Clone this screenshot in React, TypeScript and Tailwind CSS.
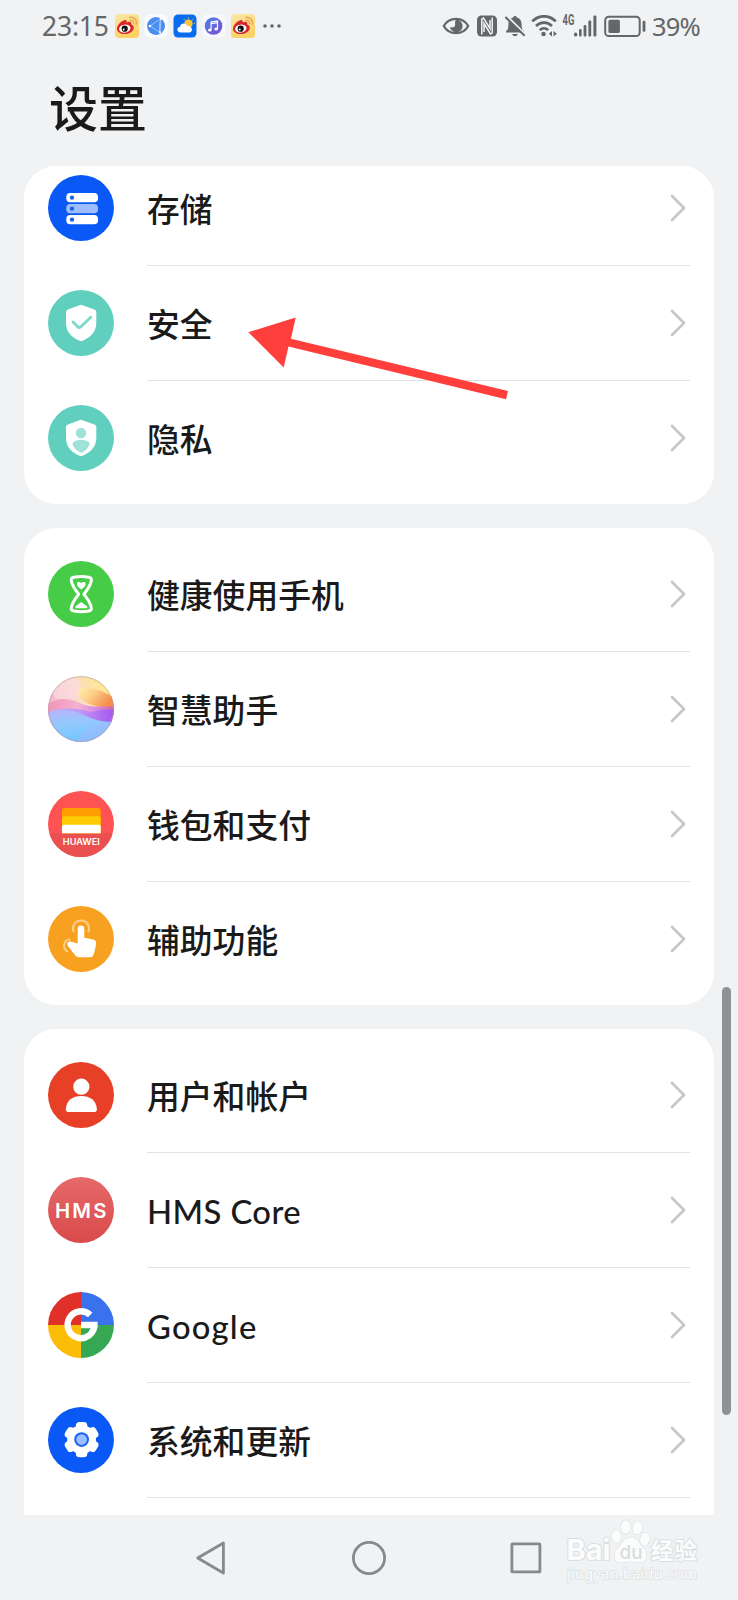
import type { ReactNode } from "react";

const SHIELD = "M33 14.7 L46.5 19.6 Q48.3 20.4 48.3 22.3 V33 C48.3 42 42 48 33 51.3 C24 48 18 42 18 33 V22.3 Q18 20.4 19.8 19.6 Z";

function Icon({ bg, children }: { bg: string; children: ReactNode }) {
  return (
    <svg width="66" height="66" viewBox="0 0 66 66" className="shrink-0">
      <circle cx="33" cy="33" r="33" fill={bg} />
      {children}
    </svg>
  );
}

function StorageIcon() {
  return (
    <Icon bg="#0a59f7">
      <rect x="18.3" y="18" width="31.7" height="9.2" rx="3.8" fill="#fff" />
      <rect x="18.3" y="29" width="31.7" height="9.2" rx="3.8" fill="#9dbdfc" />
      <rect x="18.3" y="40" width="31.7" height="9.2" rx="3.8" fill="#fff" />
      {[22.6, 33.6, 44.6].map((y) => (
        <circle key={y} cx="24" cy={y} r="2.2" fill="#1b5fe8" />
      ))}
    </Icon>
  );
}

function SecurityIcon() {
  return (
    <Icon bg="#61cfbe">
      <path d={SHIELD} fill="#fff" />
      <path d="M25 32 L30.3 37.3 Q31.3 38 32.3 37.2 L42.8 27.2" fill="none" stroke="#7dd8ca" strokeWidth="2.8" strokeLinecap="round" />
    </Icon>
  );
}

function PrivacyIcon() {
  return (
    <Icon bg="#61cfbe">
      <path d={SHIELD} fill="#fff" />
      <circle cx="33" cy="28" r="5.2" fill="#9fe2d7" />
      <path d="M24.5 38.5 C27 33.5 39 33.5 41.7 38.5 C41 42.5 37 46.5 33 47.8 C29 46.5 25.3 42.5 24.5 38.5 Z" fill="#9fe2d7" />
    </Icon>
  );
}

function HourglassIcon() {
  return (
    <Icon bg="#47cc47">
      <path
        d="M26 16.2 Q33.3 15 40.6 16.2 Q43.8 16.7 43.3 19.5 C42.5 25.5 38.5 29.5 36 33.2 C38.5 37 42.5 41 43.3 46.8 Q43.8 49.6 40.6 50.1 Q33.3 51.3 26 50.1 Q22.8 49.6 23.3 46.8 C24.1 41 28.1 37 30.6 33.2 C28.1 29.5 24.1 25.5 23.3 19.5 Q22.8 16.7 26 16.2 Z"
        fill="none"
        stroke="#fff"
        strokeWidth="3"
        strokeLinejoin="round"
      />
      <path d="M33.3 28.5 C30.5 26.3 28.6 24.5 29 22.5 C29.5 20.6 32 20.5 33.3 22.3 C34.6 20.5 37.2 20.6 37.7 22.5 C38 24.5 36 26.3 33.3 28.5 Z" fill="#fff" />
      <path d="M33.3 41 L39.3 45.4 Q39.8 47.2 38 47.2 H28.6 Q26.8 47.2 27.3 45.4 Z" fill="#fff" />
    </Icon>
  );
}

function AssistantIcon() {
  return (
    <svg width="66" height="66" viewBox="0 0 66 66" className="shrink-0">
      <defs>
        <clipPath id="ball"><circle cx="33" cy="33" r="33" /></clipPath>
        <linearGradient id="sky" x1="0" y1="0.4" x2="0.8" y2="0">
          <stop offset="0" stopColor="#f5b3cb" />
          <stop offset="0.5" stopColor="#fbdcc9" />
          <stop offset="1" stopColor="#fbe98c" />
        </linearGradient>
        <linearGradient id="sun" x1="0" y1="0" x2="1" y2="0.5">
          <stop offset="0" stopColor="#fff3ae" />
          <stop offset="0.45" stopColor="#fbd08a" />
          <stop offset="1" stopColor="#f68d4c" />
        </linearGradient>
        <linearGradient id="dune" x1="0" y1="0" x2="1" y2="0">
          <stop offset="0" stopColor="#ef95b6" />
          <stop offset="0.45" stopColor="#f5b2d2" />
          <stop offset="0.75" stopColor="#d583e4" />
          <stop offset="1" stopColor="#d0649f" />
        </linearGradient>
        <linearGradient id="violet" x1="0" y1="0" x2="1" y2="0">
          <stop offset="0" stopColor="#c0b4f4" />
          <stop offset="0.5" stopColor="#c193f8" />
          <stop offset="1" stopColor="#a457ee" />
        </linearGradient>
        <linearGradient id="sea" x1="0.3" y1="0" x2="0.5" y2="1">
          <stop offset="0" stopColor="#b3b6fa" />
          <stop offset="0.4" stopColor="#94c8fd" />
          <stop offset="1" stopColor="#6fc8fe" />
        </linearGradient>
      </defs>
      <g clipPath="url(#ball)">
        <rect width="66" height="66" fill="url(#sky)" />
        <circle cx="18" cy="12" r="14" fill="#fbdadf" opacity="0.7" />
        <path d="M0 28 C12 20 24 23 34 28 C46 32 56 31 66 27 V50 H0 Z" fill="url(#dune)" />
        <path d="M30 16 C32 9 52 11 66 22 V30 C50 33 31 27 30 16 Z" fill="url(#sun)" />
        <path d="M0 36 C14 31 30 32 42 36 C52 34 58 33 66 34 V50 H0 Z" fill="url(#violet)" />
        <path d="M0 37 C14 31 26 34 36 39 C46 44 56 47 66 45 V66 H0 Z" fill="url(#sea)" />
        <path d="M28 66 C34 54 50 46 66 46 V66 Z" fill="#a6b4fb" opacity="0.5" />
      </g>
      <circle cx="33" cy="33" r="32.4" fill="none" stroke="#b99aa8" strokeWidth="1" opacity="0.6" />
    </svg>
  );
}

function WalletIcon() {
  return (
    <Icon bg="#ff5252">
      <path d="M1.3 42.3 H64.7 A33 33 0 0 1 1.3 42.3 Z" fill="#e9504f" />
      <path d="M14 42.3 V19 Q14 17 16 17 H50.5 Q52.7 17 52.7 19 V42.3 Z" fill="#ff9d00" />
      <path d="M14 42.3 V27 Q14 25.2 16 25.2 H50.5 Q52.7 25.2 52.7 27 V42.3 Z" fill="#ffcb05" />
      <path d="M14 42.3 V36 Q14 33.8 16 33.8 H50.5 Q52.7 33.8 52.7 36 V42.3 Z" fill="#fff" />
      <text x="14.8" y="54.4" textLength="37" lengthAdjust="spacingAndGlyphs" fontFamily="Inter, sans-serif" fontSize="8.4" fontWeight="600" fill="#fff">
        HUAWEI
      </text>
    </Icon>
  );
}

function TouchIcon() {
  return (
    <Icon bg="#f8a120">
      <path d="M25.6 25.5 A8 8 0 1 1 40.4 25.5" fill="none" stroke="#fbd08f" strokeWidth="2" strokeLinecap="round" />
      <path d="M21.4 33.4 C16 34.5 14 41 19 45.5" fill="none" stroke="#fbd08f" strokeWidth="2" strokeLinecap="round" />
      <path
        d="M29.7 22.8 A3.3 3.3 0 0 1 36.3 22.8 V31.8 L45.2 33.4 Q48.2 34.2 48 37.2 C47.6 42 46.8 45 45.4 49 Q44.7 51.2 42.3 51.2 H31 Q28.8 51.2 27.3 49.6 L20.3 40.6 C18 37.5 20.5 35 23.2 35.7 L29.7 37.4 Z"
        fill="#fff"
      />
    </Icon>
  );
}

function UserIcon() {
  return (
    <Icon bg="#e84026">
      <circle cx="33.3" cy="24.7" r="8.1" fill="#fff" />
      <path d="M17.8 47.2 C18.3 38.5 24.5 34 33.3 34 C42.1 34 48.4 38.5 48.9 47.2 Q48.9 50 46 50 H20.7 Q17.8 50 17.8 47.2 Z" fill="#fff" />
    </Icon>
  );
}

function HmsIcon() {
  return (
    <Icon bg="url(#hms)">
      <defs>
        <linearGradient id="hms" x1="0" y1="0" x2="0" y2="1">
          <stop offset="0" stopColor="#e6696a" />
          <stop offset="1" stopColor="#d94a4b" />
        </linearGradient>
      </defs>
      <text x="7" y="40.6" textLength="51.5" lengthAdjust="spacing" fontFamily="Inter, sans-serif" fontSize="20.3" fontWeight="600" fill="#fff">
        HMS
      </text>
    </Icon>
  );
}

function GoogleIcon() {
  return (
    <svg width="66" height="66" viewBox="0 0 66 66" className="shrink-0">
      <path d="M33 33 V0 A33 33 0 0 0 0 33 Z" fill="#e1302a" />
      <path d="M33 33 H66 A33 33 0 0 0 33 0 Z" fill="#3a72ee" />
      <path d="M33 33 V66 A33 33 0 0 0 66 33 Z" fill="#36a853" />
      <path d="M33 33 H0 A33 33 0 0 0 33 66 Z" fill="#fbbc05" />
      <path d="M42.2 23 A13.4 13.4 0 1 0 46.4 33" fill="none" stroke="#fff" strokeWidth="6.4" />
      <path d="M33 29.8 H49.6 V33 L49.3 36.2 H33 Z" fill="#fff" />
    </svg>
  );
}

function SystemIcon() {
  return (
    <Icon bg="#0a59f7">
      <circle cx="33.6" cy="32.6" r="14.4" fill="#fff" />
      {[0, 60, 120].map((a) => (
        <rect key={a} x="27.9" y="14.9" width="11.4" height="35.4" rx="3.6" fill="#fff" transform={`rotate(${a} 33.6 32.6)`} />
      ))}
      <circle cx="33.6" cy="32.6" r="7.4" fill="#1c64f5" />
      <circle cx="33.6" cy="32.6" r="5.3" fill="#9dbdfc" />
    </Icon>
  );
}

interface Item {
  label: string;
  icon: ReactNode;
  tracking?: string;
}

const storageItems: Item[] = [
  { label: "存储", icon: <StorageIcon /> },
  { label: "安全", icon: <SecurityIcon /> },
  { label: "隐私", icon: <PrivacyIcon /> },
];

const featureItems: Item[] = [
  { label: "健康使用手机", icon: <HourglassIcon /> },
  { label: "智慧助手", icon: <AssistantIcon /> },
  { label: "钱包和支付", icon: <WalletIcon /> },
  { label: "辅助功能", icon: <TouchIcon /> },
];

const systemItems: Item[] = [
  { label: "用户和帐户", icon: <UserIcon /> },
  { label: "HMS Core", icon: <HmsIcon />, tracking: "tracking-[0.4px]" },
  { label: "Google", icon: <GoogleIcon />, tracking: "tracking-[1.2px]" },
  { label: "系统和更新", icon: <SystemIcon /> },
];

function Row({ item, divider }: { item: Item; divider: boolean }) {
  return (
    <div className="flex h-[115px] shrink-0 px-6">
      <div className="flex h-[114px] items-center">{item.icon}</div>
      <div className={`ml-[33px] flex flex-1 items-center justify-between border-b pr-[4px] ${divider ? "border-[#e2e2e3]" : "border-transparent"}`}>
        <span className={`pt-[4px] text-[32.8px] font-medium leading-none text-[#1a1a1a] ${item.tracking ?? ""}`}>{item.label}</span>
        <svg width="16" height="28" viewBox="0 0 16 28" fill="none" stroke="#c6c6c7" strokeWidth="2.7" strokeLinecap="round" strokeLinejoin="round">
          <path d="M2 2 L14 14 L2 26" />
        </svg>
      </div>
    </div>
  );
}

function WeiboIcon() {
  return (
    <svg width="24" height="24" viewBox="0 0 24 24">
      <defs>
        <linearGradient id="weibo" x1="0" y1="0" x2="0.3" y2="1">
          <stop offset="0" stopColor="#fbe7a8" />
          <stop offset="1" stopColor="#fbd164" />
        </linearGradient>
      </defs>
      <rect width="24" height="24" rx="4" fill="url(#weibo)" />
      <path d="M9.5 6.2 C11.5 5.6 12 6.8 11.6 8.4 C14.5 7.3 17 7.6 16.2 10.6 C18.5 11.4 19.2 13 18.6 15 C17.4 18.4 13.6 20.2 9.6 20.1 C5.4 20 2 18 2 14.8 C2 11.6 5.6 7.2 9.5 6.2 Z" fill="#d9272b" />
      <ellipse cx="9.8" cy="14.6" rx="5.7" ry="4" fill="#fff" transform="rotate(-8 9.8 14.6)" />
      <circle cx="9.7" cy="14.7" r="3.1" fill="#111" />
      <circle cx="8.7" cy="15.6" r="1" fill="#fff" />
      <path d="M14.8 3.4 C18.8 2.6 22.4 6.2 21.3 10.4 M15.2 6.4 C17.4 6 19.2 7.8 18.6 9.8" fill="none" stroke="#e9a95a" strokeWidth="1.5" strokeLinecap="round" />
    </svg>
  );
}

function StatusBar() {
  return (
    <header className="flex h-[52px] shrink-0 items-center pl-[42px] font-['Noto_Sans',sans-serif] text-[26.5px] leading-none text-[#646668]">
      <span className="w-[73px] whitespace-nowrap pt-px tracking-[-0.2px]">23:15</span>
      <div className="flex items-center gap-[5px] pb-px">
        <WeiboIcon />
        <svg width="24" height="24" viewBox="0 0 24 24">
          <rect x="0.5" y="0.5" width="23" height="23" rx="5" fill="#fbfcfe" />
          <circle cx="12" cy="12" r="9" fill="#4a8df0" />
          <path d="M17 4.5 L6 12 L16 18.5 Z M3.5 12 H6 M17 4.5 C15 9 15 14 16 18.5" fill="none" stroke="#b4d1fa" strokeWidth="0.8" />
          <circle cx="6" cy="12" r="1.2" fill="#fff" />
          <circle cx="16.6" cy="5" r="1" fill="#fff" />
          <circle cx="16" cy="18.3" r="1.1" fill="#fff" />
        </svg>
        <svg width="24" height="24" viewBox="0 0 24 24">
          <rect x="0.5" y="0.5" width="23" height="23" rx="4.5" fill="#0a6df0" />
          <circle cx="15.5" cy="9.5" r="4.1" fill="#fcc63d" />
          <path d="M15.5 4.4 V3.4 M19.4 5.9 L20.2 5.1 M20.8 9.5 H21.8 M11.6 5.9 L10.8 5.1" stroke="#fcc63d" strokeWidth="1" />
          <path d="M7.6 18.4 C3.6 18.4 3.3 13.3 7 12.8 C7.6 8.7 13 8.5 14.1 12 C19.7 11 20.5 18.4 16.2 18.4 Z" fill="#fff" />
        </svg>
        <svg width="24" height="24" viewBox="0 0 24 24">
          <defs>
            <linearGradient id="music" x1="0" y1="0" x2="1" y2="1">
              <stop offset="0" stopColor="#4b86e8" />
              <stop offset="1" stopColor="#7d4bd0" />
            </linearGradient>
          </defs>
          <rect x="0.5" y="0.5" width="23" height="23" rx="5" fill="#f8f8fd" />
          <circle cx="11.5" cy="12" r="8.8" fill="url(#music)" />
          <path d="M9.1 15.7 V7.9 L15.5 6.9 V14.7 M9.1 9.6 L15.5 8.6" fill="none" stroke="#fff" strokeWidth="1.2" />
          <ellipse cx="7.8" cy="15.9" rx="1.8" ry="1.5" fill="#fff" />
          <ellipse cx="14.2" cy="14.9" rx="1.8" ry="1.5" fill="#fff" />
        </svg>
        <WeiboIcon />
      </div>
      <svg width="20" height="6" viewBox="0 0 20 6" className="ml-[7px]" fill="currentColor">
        <circle cx="3" cy="3" r="1.8" />
        <circle cx="10" cy="3" r="1.8" />
        <circle cx="17" cy="3" r="1.8" />
      </svg>

      <div className="ml-auto flex items-center pb-px pr-[38px]">
        {/* eye comfort */}
        <svg width="28" height="20" viewBox="0 0 28 20">
          <path d="M1.8 10 C7 0.4 21 0.4 26.2 10 C21 19.6 7 19.6 1.8 10 Z" fill="none" stroke="currentColor" strokeWidth="2.3" />
          <path d="M14.3 3.6 A6.4 6.4 0 1 1 7.9 11 C10 12.2 13.5 11 13.2 8.4 C13 6.5 12.8 5 14.3 3.6 Z" fill="currentColor" />
        </svg>
        {/* nfc */}
        <svg width="22" height="22" viewBox="0 0 22 22" className="ml-[6px]">
          <rect x="1" y="0.5" width="20" height="21" rx="4.5" fill="currentColor" />
          <path d="M5.8 19.5 V4.2 L7.5 3 L14 13.5 V5 M16.2 2.5 V17.8 L14.5 19 L8 8.5 V17" fill="none" stroke="#f0f2f4" strokeWidth="1.5" />
        </svg>
        {/* muted */}
        <svg width="22" height="22" viewBox="0 0 22 22" className="ml-[6px]">
          <path d="M11 1 Q12.6 1 12.8 2.4 C16.6 3.4 17.6 6.4 17.6 10 C17.6 13.5 18.6 14.8 20 16.2 V17.4 H2 V16.2 C3.6 14.8 4.4 13.5 4.4 10 C4.4 6.4 5.4 3.4 9.2 2.4 Q9.4 1 11 1 Z" fill="currentColor" />
          <path d="M8 19 H14 Q13 21.3 11 21.3 Q9 21.3 8 19 Z" fill="currentColor" />
          <path d="M2.8 1 L22 20" stroke="#f0f2f4" strokeWidth="2" />
          <path d="M1.4 2 L20.6 20.8" stroke="currentColor" strokeWidth="2" />
        </svg>
        {/* wifi */}
        <svg width="27" height="22" viewBox="0 0 27 22" className="ml-[5px]" fill="none" stroke="currentColor">
          <path d="M1.2 6.4 C7.8 -0.4 18.2 -0.4 24.8 6.4 M5 11 C9.4 6.4 16.6 6.4 21 11 M8.8 15.2 C11.2 12.6 14.8 12.6 17.2 15.2" strokeWidth="2.7" />
          <circle cx="12.5" cy="19" r="2.3" fill="currentColor" stroke="none" />
          <path d="M21 16 V21.5 L17.8 18.7 Z M22.6 16 V21.5 L25.8 18.7 Z" fill="currentColor" stroke="none" />
        </svg>
        {/* signal */}
        <svg width="36" height="24" viewBox="0 0 36 24" className="ml-[4px]" fill="currentColor">
          <text x="0.5" y="11" textLength="11.8" lengthAdjust="spacingAndGlyphs" fontFamily="Roboto, sans-serif" fontSize="14.5" fontWeight="700">
            4G
          </text>
          <rect x="12" y="18.5" width="3.2" height="4" rx="1.5" />
          <rect x="17" y="15" width="2.6" height="7.5" rx="1" />
          <rect x="21.6" y="11" width="2.8" height="11.5" rx="1" />
          <rect x="26.4" y="6.5" width="2.8" height="16" rx="1" />
          <rect x="31.4" y="1.5" width="3" height="21" rx="1" />
        </svg>
        {/* battery */}
        <svg width="42" height="24" viewBox="0 0 42 24" className="ml-[6px]">
          <rect x="1.2" y="2.7" width="34.5" height="19.4" rx="3.6" fill="none" stroke="currentColor" strokeWidth="2" />
          <rect x="4.4" y="5.8" width="11.5" height="13.2" rx="1.6" fill="currentColor" />
          <rect x="38.6" y="6.8" width="2.8" height="11" rx="1.2" fill="currentColor" />
        </svg>
        <span className="ml-[6px] w-[48px] whitespace-nowrap pt-[3px] text-[25.5px] tracking-[-0.8px]">39%</span>
      </div>
    </header>
  );
}

function Watermark() {
  return (
    <svg width="140" height="70" viewBox="0 0 140 70" className="absolute right-[32px] top-[4px]">
      <g fill="#fbfcfc" stroke="#dcdfe1" strokeWidth="1.2" paintOrder="stroke">
        <text x="0.5" y="41" textLength="44" lengthAdjust="spacingAndGlyphs" fontFamily="Inter, sans-serif" fontSize="28" fontWeight="700" strokeWidth="2">Bai</text>
        <ellipse cx="50.5" cy="17.5" rx="4.8" ry="6.3" transform="rotate(-8 50.5 17.5)" />
        <ellipse cx="59.8" cy="8" rx="4.8" ry="6.8" />
        <ellipse cx="71.5" cy="9" rx="4.8" ry="6.5" transform="rotate(10 71.5 9)" />
        <ellipse cx="79" cy="20" rx="4.8" ry="6.3" transform="rotate(10 79 20)" />
        <path d="M57 22.5 C61 17.5 68 17.5 72 22.5 C75.5 27.5 80.5 30 80.5 36.5 C80.5 42.5 76 44.5 70 43 Q64.5 42 59 43 C53 44.5 48.5 42.5 48.5 36.5 C48.5 30 54 27.5 57 22.5 Z" />
        <text x="53.5" y="39.5" fontFamily="Inter, sans-serif" fontSize="19" fontWeight="500" fill="#d9dcde" stroke="none" textLength="23" lengthAdjust="spacingAndGlyphs">du</text>
        <text x="85" y="39.5" textLength="46" fontFamily="'Noto Sans CJK SC', sans-serif" fontSize="22.5" fontWeight="700" strokeWidth="2">经验</text>
        <text x="1" y="60" textLength="130" fontFamily="'Noto Sans', sans-serif" fontSize="14.5" strokeWidth="1.4">jingyan.baidu.com</text>
      </g>
    </svg>
  );
}

export default function App() {
  return (
    <div className="relative flex h-[1600px] w-[738px] flex-col overflow-hidden bg-[#f0f2f4] font-[Lato,'Noto_Sans_CJK_SC',sans-serif]">
      <StatusBar />
      <h1 className="flex h-[114px] shrink-0 items-center pb-px pl-[49px] text-[49px] font-medium leading-none text-[#1a1a1a]">设置</h1>

      <main className="flex h-[1349px] shrink-0 flex-col gap-6 overflow-hidden px-6">
        {/* first card is scrolled slightly under the title */}
        <section className="flex h-[338px] shrink-0 flex-col justify-end overflow-hidden rounded-[32px] bg-white pb-2">
          {storageItems.map((item, i) => (
            <Row key={item.label} item={item} divider={i < 2} />
          ))}
        </section>
        <section className="shrink-0 rounded-[32px] bg-white pb-2 pt-[9px]">
          {featureItems.map((item, i) => (
            <Row key={item.label} item={item} divider={i < 3} />
          ))}
        </section>
        <section className="h-[560px] shrink-0 rounded-[32px] bg-white pt-[9px]">
          {systemItems.map((item) => (
            <Row key={item.label} item={item} divider />
          ))}
        </section>
      </main>

      <nav className="relative flex flex-1 items-center pl-[195px]">
        <div className="flex items-center gap-[122px]">
          <svg width="34" height="36" viewBox="0 0 34 36" fill="none" stroke="#88898b" strokeWidth="2.8" strokeLinejoin="round">
            <path d="M2.7 18 L28.4 3 V33 Z" />
          </svg>
          <svg width="36" height="36" viewBox="0 0 36 36" fill="none" stroke="#88898b" strokeWidth="2.8">
            <circle cx="18" cy="18" r="15.6" />
          </svg>
          <svg width="34" height="36" viewBox="0 0 34 36" fill="none" stroke="#88898b" strokeWidth="2.8" strokeLinejoin="round">
            <rect x="2.9" y="3.9" width="28" height="28" rx="0.5" />
          </svg>
        </div>
        <Watermark />
      </nav>

      {/* scrollbar */}
      <div className="absolute left-[722px] top-[987px] h-[428px] w-[9px] rounded-full bg-[#909193]" />

      {/* pointer to the security entry */}
      <svg width="262" height="84" viewBox="0 0 262 84" className="absolute left-[247px] top-[316px]">
        <path d="M1.3 16.2 L48.7 1.5 L43.9 22.7 L261 74.9 L259 83.2 L41.5 30.6 L36.7 51.4 Z" fill="#ff3f3c" />
      </svg>
    </div>
  );
}
